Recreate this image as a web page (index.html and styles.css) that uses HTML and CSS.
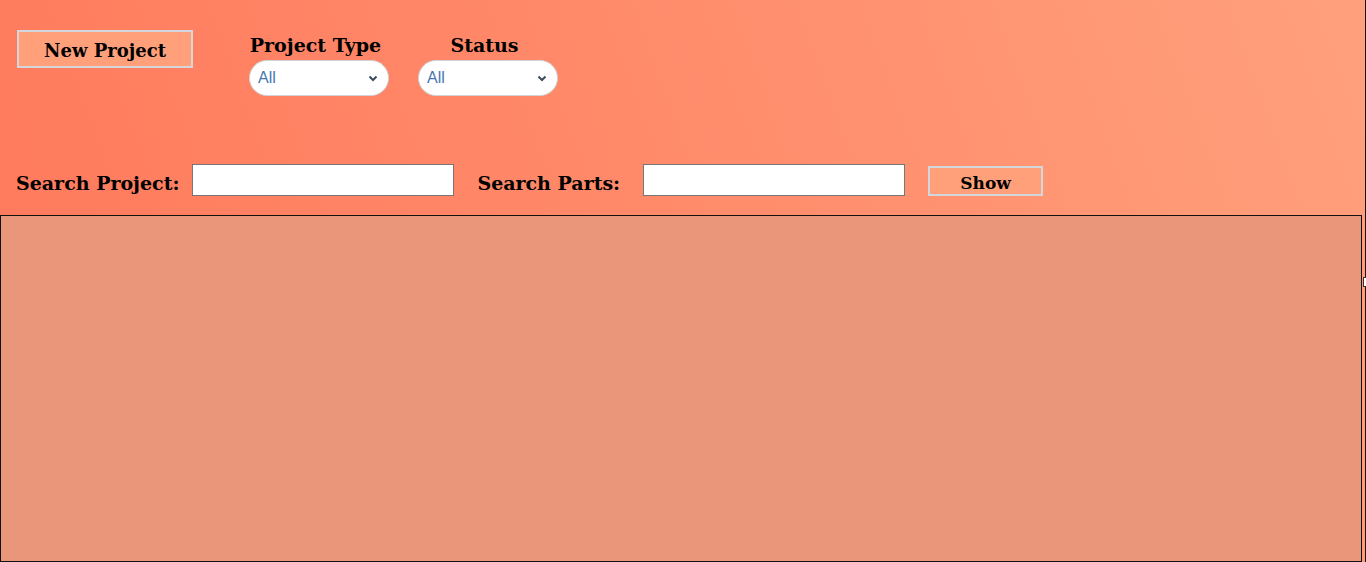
FILE: index.html
```html
<!DOCTYPE html>
<html lang="en">
<head>
<meta charset="utf-8">
<title>Projects</title>
<link rel="stylesheet" href="styles.css">
</head>
<body>
<div class="page">
  <div class="toolbar">
    <button class="btn btn-new" type="button">New Project</button>
    <div class="filter">
      <label class="filter-label" for="ptype">Project Type</label>
      <div class="select-wrap">
        <select id="ptype" class="select"><option>All</option></select>
        <svg class="chev" width="10" height="7" viewBox="0 0 10 7"><path d="M1.5 1.5 L5 5 L8.5 1.5" fill="none" stroke="#3b4b5e" stroke-width="2"/></svg>
      </div>
    </div>
    <div class="filter">
      <label class="filter-label" for="pstatus">Status</label>
      <div class="select-wrap">
        <select id="pstatus" class="select"><option>All</option></select>
        <svg class="chev" width="10" height="7" viewBox="0 0 10 7"><path d="M1.5 1.5 L5 5 L8.5 1.5" fill="none" stroke="#3b4b5e" stroke-width="2"/></svg>
      </div>
    </div>
  </div>
  <div class="search-row">
    <label class="search-label lbl-project" for="sproj">Search Project:</label>
    <input id="sproj" class="search-input" type="text">
    <label class="search-label lbl-parts" for="sparts">Search Parts:</label>
    <input id="sparts" class="search-input input-last" type="text">
    <button class="btn btn-show" type="button">Show</button>
  </div>
  <div class="results"></div>
  <div class="edge"><span class="edge-tab"></span></div>
</div>
</body>
</html>
```
FILE: styles.css
```css
html, body {
  margin: 0;
  padding: 0;
  height: 100%;
}
body {
  font-family: "DejaVu Serif", serif;
  background: linear-gradient(70deg, #ff785b 0%, #ff8a6a 50%, #ffa07c 100%);
  overflow: hidden;
}
.page {
  position: relative;
  height: 562px;
}
.toolbar {
  display: flex;
  align-items: flex-start;
  padding: 30px 0 0 17px;
}
.btn {
  font-family: "DejaVu Serif", serif;
  font-weight: bold;
  color: #000;
  background: #ffa07a;
  border: 2px solid #d3d7dc;
  box-sizing: border-box;
  padding: 0;
  cursor: pointer;
}
.btn-new {
  width: 176px;
  height: 38px;
  font-size: 18px;
  padding-top: 2px;
  margin-right: 56px;
}
.filter {
  width: 140px;
  display: flex;
  flex-direction: column;
  align-items: center;
  margin-right: 29px;
}
.filter-label {
  font-weight: bold;
  font-size: 19px;
  line-height: 24px;
  height: 27px;
  padding: 3px 7px 0 0;
  color: #000;
}
.select-wrap {
  position: relative;
  width: 140px;
  height: 36px;
}
.select {
  appearance: none;
  -webkit-appearance: none;
  width: 140px;
  height: 36px;
  box-sizing: border-box;
  border: 1px solid #d0d4d8;
  border-radius: 18px;
  background: #fff;
  font-family: "Liberation Sans", Arial, sans-serif;
  font-size: 16px;
  color: #4677b0;
  padding: 0 0 2px 8px;
  outline: none;
}
.chev {
  position: absolute;
  right: 11px;
  top: 15px;
  pointer-events: none;
}
.search-row {
  display: flex;
  align-items: center;
  padding-left: 16px;
  margin-top: 68px;
  height: 32px;
}
.search-label {
  font-weight: bold;
  font-size: 19px;
  color: #000;
  padding-top: 6px;
}
.lbl-project {
  margin-right: 13px;
}
.lbl-parts {
  margin-right: 23px;
}
.search-input {
  width: 262px;
  height: 32px;
  box-sizing: border-box;
  border: 1px solid #767676;
  background: #fff;
  padding: 0 4px;
  margin: 0 23px 0 0;
  font-size: 15px;
  outline: none;
}
.input-last {
  margin-right: 23px;
}
.btn-show {
  width: 115px;
  height: 30px;
  font-size: 17px;
  padding-top: 4px;
  margin-top: 2px;
}
.results {
  margin-top: 19px;
  width: 1362px;
  height: 347px;
  box-sizing: border-box;
  border: 1px solid #111;
  background: #e9967a;
}
.edge {
  position: absolute;
  top: 0;
  right: 0;
  width: 1px;
  height: 562px;
  background: #1b1410;
}
.edge-tab {
  position: absolute;
  left: -2px;
  top: 277px;
  width: 3px;
  height: 8px;
  background: #fff;
  border: 1px solid #333;
  border-right: none;
}
```
